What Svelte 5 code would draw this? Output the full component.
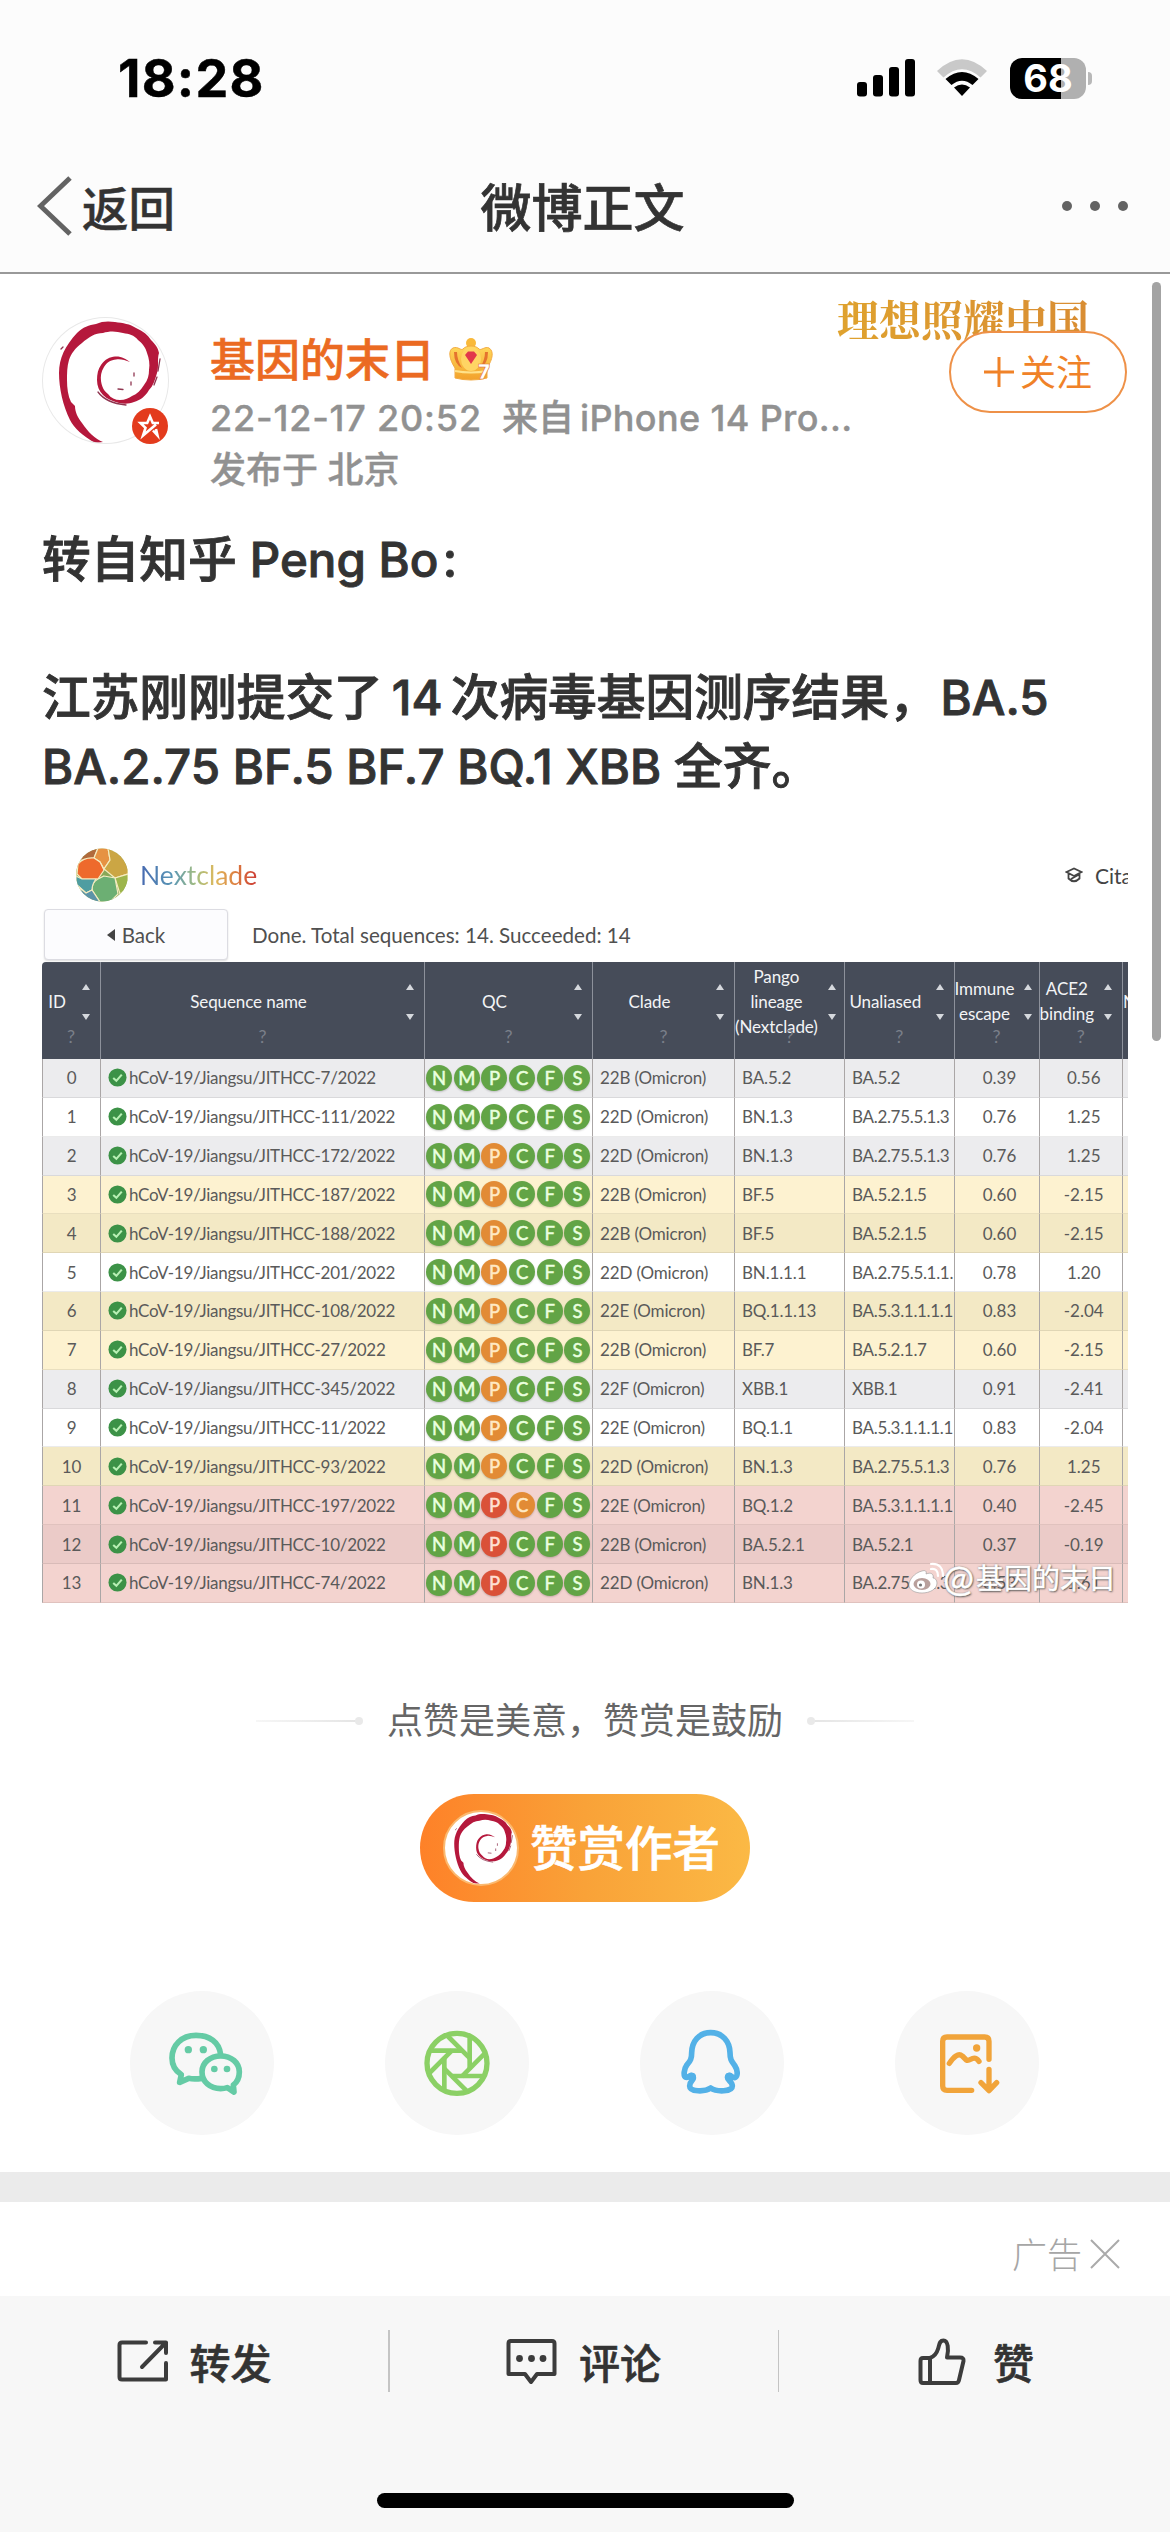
<script>
  const columns = [
    { key: 'id', lines: ['ID'] },
    { key: 'name', lines: ['Sequence name'] },
    { key: 'qc', lines: ['QC'] },
    { key: 'clade', lines: ['Clade'] },
    { key: 'pango', lines: ['Pango', 'lineage', '(Nextclade)'] },
    { key: 'unaliased', lines: ['Unaliased'] },
    { key: 'escape', lines: ['Immune', 'escape'] },
    { key: 'ace', lines: ['ACE2', 'binding'] }
  ];

  // [name suffix, clade, pango, unaliased, immune escape, ACE2, row tone, QC levels]
  const rows = [
    ['7', '22B', 'BA.5.2', 'BA.5.2', '0.39', '0.56', 'gray', 'gggggg'],
    ['111', '22D', 'BN.1.3', 'BA.2.75.5.1.3', '0.76', '1.25', 'white', 'gggggg'],
    ['172', '22D', 'BN.1.3', 'BA.2.75.5.1.3', '0.76', '1.25', 'gray', 'ggoggg'],
    ['187', '22B', 'BF.5', 'BA.5.2.1.5', '0.60', '-2.15', 'yellow', 'ggoggg'],
    ['188', '22B', 'BF.5', 'BA.5.2.1.5', '0.60', '-2.15', 'yellow-dark', 'ggoggg'],
    ['201', '22D', 'BN.1.1.1', 'BA.2.75.5.1.1.', '0.78', '1.20', 'white', 'ggoggg'],
    ['108', '22E', 'BQ.1.1.13', 'BA.5.3.1.1.1.1', '0.83', '-2.04', 'yellow-dark', 'ggoggg'],
    ['27', '22B', 'BF.7', 'BA.5.2.1.7', '0.60', '-2.15', 'yellow', 'ggoggg'],
    ['345', '22F', 'XBB.1', 'XBB.1', '0.91', '-2.41', 'gray', 'ggoggg'],
    ['11', '22E', 'BQ.1.1', 'BA.5.3.1.1.1.1', '0.83', '-2.04', 'white', 'ggoggg'],
    ['93', '22D', 'BN.1.3', 'BA.2.75.5.1.3', '0.76', '1.25', 'yellow-dark', 'ggoggg'],
    ['197', '22E', 'BQ.1.2', 'BA.5.3.1.1.1.1', '0.40', '-2.45', 'red', 'ggrogg'],
    ['10', '22B', 'BA.5.2.1', 'BA.5.2.1', '0.37', '-0.19', 'red-dark', 'ggrggg'],
    ['74', '22D', 'BN.1.3', 'BA.2.75.5.1.3', '0.53', '1.61', 'red', 'ggrggg']
  ];
  const qcLetters = ['N', 'M', 'P', 'C', 'F', 'S'];
  const bladeAngles = [0, 45, 90, 135, 180, 225, 270, 315];
</script>

{#snippet swirl()}
  <svg class="swirl" viewBox="0 0 125 125">
    <path
      d="M52 125 C40 118 31 110 27 102 C20 88 16 70 16 55 C16 40 22 28 34 15 C40 9 46 7 53 6 C59 3 66 3 72 4 C80 5 87 6 93 10 C100 13 105 17 108 22 C113 27 115 30 116 35 C114 41 116 48 114 55 C112 62 110 68 106 72 C102 79 97 82 91 84 C86 86 81 86 76 85 C69 83 64 81 60 77 C56 73 54 68 54 62 C54 56 55 51 58 47 C62 41 67 39 72 38.500 C78 38 83 41 87 44 C82 42 77 40.500 73 41.500 C68 42 64 44 61 49 C58 54 57.500 58 58 63 C59 69 61 73 65 76 C68 80 72 82 77 82 C82 82 86 80 89 78 C94 76 98 72 101 67 C105 62 106 57 106 52 C107 46 106 40 104 35 C103 30 99 25 95 22 C91 17 86 16 80 15 C73 13 66 13 60 15 C52 15 46 19 39 25 C32 30 28 36 26 42 C24 49 24 55 24 62 C24 70 25 78 28 84 L32 88 C32 94 35 100 39 105 C45 114 52 121 60 124 Z"
      fill="#b5183c"
    />
    <path d="M91 55 v3 M88 64 v3 M75 71 l5 .5 M18 31 l2 -2 M117 41 l-2 12 M114 59 l-3 8 M55 74 q8 11 28 13" fill="none" stroke="#8f3550" stroke-width="1.300" stroke-linecap="round" />
  </svg>
{/snippet}

<div class="screen">
  <header class="top">
    <div class="status">
      <span class="time">18:28</span>
      <div class="indicators">
        <svg class="signal" viewBox="0 0 58 38" width="58" height="38">
          <rect x="0" y="23" width="10" height="14.500" rx="3" />
          <rect x="16" y="16" width="10" height="21.500" rx="3" />
          <rect x="32" y="8" width="10" height="29.500" rx="3" />
          <rect x="48" y="0" width="10" height="37.500" rx="3" />
        </svg>
        <svg class="wifi" viewBox="0 0 52 38" width="52" height="38">
          <path d="M1 12 Q26 -11.500 51 12 L44.500 18.500 Q26 2 7.500 18.500 Z" fill="#c9c9c9" />
          <path d="M9.500 20 Q26 6 42.500 20 L36.500 26 Q26 17.500 15.500 26 Z" />
          <path d="M18 28.500 Q26 22.500 34 28.500 L26 37 Z" />
        </svg>
        <div class="battery">
          <div class="cell">68</div>
          <i></i>
        </div>
      </div>
    </div>
    <nav class="navbar">
      <div class="back">
        <svg viewBox="0 0 36 60" width="36" height="60"><path d="M33 2 L3.500 30 L33 58" fill="none" stroke="#636363" stroke-width="5" /></svg>
        <span>返回</span>
      </div>
      <h1>微博正文</h1>
      <div class="more"><i></i><i></i><i></i></div>
    </nav>
  </header>

  <main>
    <section class="author">
      <div class="avatar">
        {@render swirl()}
        <svg class="badge" viewBox="0 0 36 36">
          <circle cx="18" cy="18" r="18" fill="#e33b1d" />
          <path d="M27 15 H20.800 L18 8.500 L15.200 15 H8.500 L13.500 19.800 L11 27.500 L24 16.500 M21 22.500 L25.500 27.500 L24 21" fill="none" stroke="#fff" stroke-width="2.600" />
        </svg>
      </div>
      <div class="meta">
        <div class="name-row">
          <span class="name">基因的末日</span>
          <svg class="crown" viewBox="0 0 44 44">
            <defs>
              <linearGradient id="gold" x1="0" y1="0" x2="0" y2="1">
                <stop offset="0" stop-color="#ffd95c" /><stop offset="1" stop-color="#f2a12b" />
              </linearGradient>
            </defs>
            <circle cx="22" cy="6" r="5" fill="#f9b93a" />
            <path d="M6 41 L6 31 C0 22 -1 13 4 11 C9 9 12 14 14 12 C17 8 27 8 30 12 C32 14 36 9 40 11 C45 14 44 22 38 31 L38 41 Q22 45 6 41 Z" fill="url(#gold)" stroke="#f3ab42" />
            <path d="M5 15 Q5 27 13 31 Q8 23 8 15 M39 15 Q39 27 31 31 Q36 23 36 15" fill="#e5732e" />
            <ellipse cx="22" cy="22" rx="10" ry="12" fill="#ffd564" />
            <path d="M16 18 L19 14.500 H25 L28 18 L22 27 Z" fill="#e2384b" />
            <path d="M6 34 Q22 37 38 34" fill="none" stroke="#ffe28a" stroke-width="2" />
            <text x="29" y="42" class="level">7</text>
          </svg>
        </div>
        <div class="sub"><span class="date">22-12-17 20:52</span><span class="from">来自</span><span class="device">iPhone 14 Pro...</span></div>
        <div class="sub place">发布于 北京</div>
      </div>
      <div class="slogan">理想照耀中国</div>
      <button class="follow">
        <svg viewBox="0 0 30 30" width="30" height="30"><path d="M15 0 V30 M0 15 H30" stroke="#f08228" stroke-width="3" /></svg>
        <span>关注</span>
      </button>
    </section>

    <article class="text">
      <p><span>转自知乎</span> <b class="peng">Peng Bo</b><span class="colon">:</span></p>
      <p>&nbsp;</p>
      <p>江苏刚刚提交了<b class="num">14</b>次病毒基因测序结果，<b class="ba">BA.5</b></p>
      <p><b class="list">BA.2.75 BF.5 BF.7 BQ.1 XBB</b> 全齐。</p>
    </article>

    <figure class="shot">
      <div class="brand">
        <svg class="globe" viewBox="0 0 52 54">
          <defs><clipPath id="ball"><ellipse cx="26" cy="27" rx="26" ry="26.500" /></clipPath></defs>
          <g clip-path="url(#ball)" stroke="#f5ecc0" stroke-width="1.200">
            <rect width="52" height="54" fill="#8aa757" />
            <path d="M10 0 H22 L18 10 L8 12 L0 12 Z" fill="#b06a3c" />
            <path d="M18 10 L22 0 H32 L34 12 L28 21 L24 14 Z" fill="#e69243" />
            <path d="M2 16 Q8 9 18 10 L24 14 L28 22 L22 31 H6 L1 26 Z" fill="#ee6a2c" />
            <path d="M34 12 L32 0 L52 10 V26 L39 30 L28 21 Z" fill="#cba644" />
            <path d="M39 30 L52 26 V40 L44 46 Z" fill="#9db54c" />
            <path d="M28 28 L39 30 L42 46 L34 54 H24 L16 42 Q16 34 22 31 Z" fill="#6caf73" />
            <path d="M0 28 L6 31 H20 Q16 36 16 42 L10 45 L0 36 Z" fill="#4f9da1" />
            <path d="M4 40 L10 45 L16 42 L24 54 H8 Z" fill="#5c93a8" />
          </g>
        </svg>
        <span class="nextclade">Nextclade</span>
        <span class="cite">
          <svg viewBox="0 0 18 16" width="18" height="16"><path d="M1.500 5 L9 1.500 L16.500 5 L9 9 Z M3.500 7 V11.500 Q9 17 14.500 11.500 V7 M6 12 L14 7.500" fill="none" stroke="#444" stroke-width="1.800" /></svg>
          <span>Citation</span>
        </span>
      </div>
      <div class="toolbar">
        <span class="back-btn"><svg viewBox="0 0 8 12" width="8" height="12"><path d="M8 0 V12 L0 6 Z" fill="#444" /></svg>Back</span>
        <span class="done">Done. Total sequences: 14. Succeeded: 14</span>
      </div>
      <div class="grid head">
        {#each columns as c}
          <div class="hcell">
            <div class="label">{#each c.lines as l}<span>{l}</span>{/each}</div>
            <svg class="sort" viewBox="0 0 8 36" width="8" height="36"><path d="M0 6 L4 0 L8 6 Z M0 30 L4 36 L8 30 Z" fill="#d5d8dd" /></svg>
            <em>?</em>
          </div>
        {/each}
        <div class="hcell next">N</div>
      </div>
      {#each rows as r, i}
        <div class="grid row {r[6]}">
          <div class="c mid">{i}</div>
          <div class="c name-cell">
            <svg viewBox="0 0 20 20" width="19" height="19"><circle cx="10" cy="10" r="9.500" fill="#3c9247" /><path d="M5.500 10.500 L8.800 13.500 L14.500 7" fill="none" stroke="#b9f0b5" stroke-width="2.200" /></svg>
            <span>hCoV-19/Jiangsu/JITHCC-{r[0]}/2022</span>
          </div>
          <div class="c qc">{#each qcLetters as q, k}<i class={r[7][k]}>{q}</i>{/each}</div>
          <div class="c">{r[1]} (Omicron)</div>
          <div class="c">{r[2]}</div>
          <div class="c un">{r[3]}</div>
          <div class="c mid num-cell">{r[4]}</div>
          <div class="c mid num-cell">{r[5]}</div>
          <div class="c"></div>
        </div>
      {/each}
      <div class="watermark">
        <svg viewBox="0 0 36 32" width="36" height="32">
          <path d="M14 9 C6 11 1 18 1 23 C1 28 7 31 14 31 C22 31 29 27 29 21 C29 18 27 16 25 16 C26 12 23 10 18 12 C19 9 17 8 14 9 Z" fill="#fff" stroke="#999" stroke-width=".6" />
          <ellipse cx="14" cy="22" rx="8.500" ry="6" fill="#b9a09c" /><circle cx="13" cy="22.500" r="4" fill="#fff" /><circle cx="12.500" cy="23" r="1.600" fill="#777" />
          <path d="M23 7 Q30 6 30 14 M23 2 Q35 1 35 14" fill="none" stroke="#fff" stroke-width="2.200" stroke-linecap="round" />
        </svg>
        <span class="at">@</span><span>基因的末日</span>
      </div>
    </figure>

    <section class="tip">
      <div class="tip-line">
        <i class="rule left"></i><span>点赞是美意，赞赏是鼓励</span><i class="rule right"></i>
      </div>
      <button class="reward"><span class="mini">{@render swirl()}</span><span class="reward-text">赞赏作者</span></button>
    </section>

    <section class="share">
      <span class="bubble">
        <svg viewBox="60 61 432 432">
          <g fill="none" stroke="#65cba5" stroke-width="17" stroke-linejoin="round">
            <path d="M332 252 C328 214 298 194 258 194 C214 194 186 224 186 262 C186 286 198 302 214 312 L209 335 L236 323 C250 326 262 325 276 323" />
            <path d="M332 256 C300 256 276 276 276 304 C276 333 300 354 332 354 C340 354 346 353 352 351 L372 364 L370 343 C382 334 388 320 388 304 C388 276 364 256 332 256 Z" />
          </g>
          <g fill="#65cba5"><circle cx="235" cy="237" r="11" /><circle cx="280" cy="237" r="11" /><circle cx="313" cy="295" r="10" /><circle cx="351" cy="295" r="10" /></g>
        </svg>
      </span>
      <span class="bubble">
        <svg viewBox="827 61 432 432">
          <g fill="none" stroke="#8bd065" stroke-width="14">
            <circle cx="1043" cy="278" r="90" stroke-width="16" />
            {#each bladeAngles as a}
              <path d="M1081 198 V296" transform="rotate({a} 1043 278)" />
            {/each}
          </g>
        </svg>
      </span>
      <span class="bubble">
        <svg viewBox="91 61 432 432">
          <path d="M303 186 C268 186 247 212 246 246 C246 268 240 272 232 282 C222 296 221 316 228 320 C236 324 244 306 250 318 C256 330 240 328 240 346 C240 364 286 364 303 352 C320 364 368 364 368 346 C368 330 350 330 354 318 C360 306 370 326 377 320 C386 314 383 296 375 284 C367 273 361 268 361 246 C360 212 338 186 303 186 Z" fill="none" stroke="#53b1e7" stroke-width="17" stroke-linejoin="round" />
          <circle cx="247" cy="318" r="12" fill="#53b1e7" /><circle cx="358" cy="318" r="12" fill="#53b1e7" />
        </svg>
      </span>
      <span class="bubble">
        <svg viewBox="856 61 432 432">
          <g fill="none" stroke="#f1a43a" stroke-width="16" stroke-linecap="round" stroke-linejoin="round">
            <path d="M1138 266 V212 Q1138 199 1125 199 H1012 Q999 199 999 212 V346 Q999 359 1012 359 H1086" />
            <path d="M1138 296 V358 M1114 336 L1138 360 L1161 336" />
            <path d="M1019 278 C1032 258 1046 246 1058 256 L1070 268 C1082 276 1090 248 1108 272" />
          </g>
          <circle cx="1101" cy="232" r="11" fill="#f1a43a" />
        </svg>
      </span>
    </section>

    <div class="band"></div>
    <div class="ad"><span>广告</span><svg viewBox="0 0 30 30" width="30" height="30"><path d="M1 1 L29 29 M29 1 L1 29" stroke="#aaa" stroke-width="2" /></svg></div>
  </main>

  <footer>
    <div class="actions">
      <div class="act">
        <svg viewBox="0 0 52 46" width="52" height="46"><path d="M29 4.500 H5 Q2.500 4.500 2.500 7 V39 Q2.500 41.500 5 41.500 H49 V25 M38 4.500 H49 V15 M49 4.500 L25 29" /></svg>
        <span>转发</span>
      </div>
      <i class="sep"></i>
      <div class="act">
        <svg viewBox="0 0 52 48" width="52" height="48"><path d="M4 4 H46 Q48.500 4 48.500 6.500 V37 H31 L25 45 L19 37 H2.500 V6.500 Q2.500 4 5 4 Z" /><g class="dots"><circle cx="13.500" cy="21.500" r="3.400" /><circle cx="25.500" cy="21.500" r="3.400" /><circle cx="37" cy="21.500" r="3.400" /></g></svg>
        <span>评论</span>
      </div>
      <i class="sep"></i>
      <div class="act">
        <svg viewBox="0 0 48 50" width="48" height="50"><path d="M12 22 H5 Q2.500 22 2.500 25 V44 Q2.500 47 5 47 H38 Q40.500 47 41 44 L45.500 25 Q46 21.500 42 21.500 H29 C31 13 30 4.500 25.500 4.500 C21 4.500 21.500 9 20 13 C18.500 18 15 21 12 22 V47" /></svg>
        <span>赞</span>
      </div>
    </div>
    <i class="home"></i>
  </footer>
  <i class="scroll"></i>
</div>

<style>
  :global(body) { margin: 0; background: #fff; }
  .screen {
    position: relative; width: 1170px; height: 2532px; overflow: hidden; background: #fff; color: #333;
    display: flex; flex-direction: column;
    font-family: Inter, "Noto Sans CJK SC", sans-serif;
  }
  .screen :global(*) { box-sizing: border-box; }
  svg { display: block; flex: none; }
  i { font-style: normal; }
  button { margin: 0; padding: 0; font: inherit; }
  p, h1, figure { margin: 0; }

  .top { height: 274px; flex: none; background: #fcfcfc; border-bottom: 2px solid #999; }
  .status { height: 156px; display: flex; justify-content: space-between; padding: 0 78px 0 118px; align-items: center; }
  .time { font-size: 52px; font-weight: 700; color: #000; letter-spacing: 1.300px; -webkit-text-stroke: .5px #000; }
  .indicators { display: flex; align-items: center; }
  .wifi { margin: 0 22px 0 21px; }
  .battery { display: flex; align-items: center; gap: 2px; }
  .cell { width: 76px; height: 41px; border-radius: 12px; background: linear-gradient(90deg, #000 51px, #b0b0b0 51px); color: #fff; font-size: 38px; font-weight: 700; line-height: 41px; text-align: center; }
  .battery i { width: 4px; height: 13px; border-radius: 0 4px 4px 0; background: #b8b8b8; }
  .navbar { height: 100px; display: grid; grid-template-columns: 1fr auto 1fr; align-items: center; padding: 0 42px 0 37px; }
  .back { display: flex; align-items: center; gap: 9px; font-size: 46.500px; font-weight: 500; line-height: 60px; -webkit-text-stroke: .5px #333; }
  .back span, h1 { padding-top: 5px; }
  h1 { font-size: 51px; font-weight: 500; line-height: 60px; -webkit-text-stroke: .7px #333; }
  .more { justify-self: end; display: flex; gap: 18px; }
  .more i { width: 10px; height: 10px; border-radius: 50%; background: #636363; }

  main { flex: none; height: 2022px; }
  .author { position: relative; height: 217px; display: flex; padding-left: 43px; }
  .avatar { position: relative; width: 125px; height: 125px; margin-top: 44px; flex: none; }
  .avatar .swirl { border-radius: 50%; box-shadow: 0 0 0 1px #e8e8e8; }
  .badge { position: absolute; right: 0; bottom: -1px; width: 36px; height: 36px; }
  .meta { margin: 56px 0 0 42px; }
  .name-row { display: flex; align-items: center; gap: 14px; height: 62px; }
  .name { font-size: 45px; font-weight: 500; color: #eb6a22; line-height: 62px; -webkit-text-stroke: .6px #eb6a22; }
  .crown { width: 44px; height: 44px; margin-top: -4px; }
  .level { font: 900 20px Inter, sans-serif; fill: #fff; stroke: #e2762b; stroke-width: .6px; }
  .sub { font-size: 36px; font-weight: 500; color: #919191; line-height: 52px; height: 52px; display: flex; white-space: pre; -webkit-text-stroke: .4px #919191; }
  .date { width: 292px; letter-spacing: .8px; }
  .from { width: 78px; }
  .device { letter-spacing: .35px; }
  .slogan {
    position: absolute; left: 837px; top: 16px; font-family: "Noto Serif CJK SC", "Noto Sans CJK SC", serif; font-weight: 700;
    font-size: 42px; line-height: 56px; background: linear-gradient(90deg, #dfa22e, #d98d33); background-clip: text; color: transparent; white-space: nowrap;
  }
  .follow {
    position: absolute; left: 949px; top: 57px; width: 178px; height: 82px; border: 2px solid #ee9148; border-radius: 41px; background: #fff;
    color: #f08228; font-size: 36px; display: flex; align-items: center; justify-content: center; gap: 6px;
  }
  .follow span { margin-top: -4px; }

  .text { padding: 34px 0 0 42px; height: 344px; font-size: 48.700px; font-weight: 500; line-height: 69px; white-space: nowrap; -webkit-text-stroke: .9px #333; }
  .text p { height: 69px; }
  .text b { font-weight: 500; font-size: 47.500px; }
  .colon { margin-left: 4px; }
  .num { margin: 0 8px 0 9px; }
  .ba { margin-left: 3px; }

  .shot { position: relative; width: 1086px; height: 768px; margin-left: 42px; overflow: hidden; font-family: Lato, sans-serif; color: #5a5a5a; }
  .brand { height: 74px; display: flex; align-items: center; padding: 6px 0 0 34px; }
  .globe { width: 52px; height: 54px; }
  .nextclade { font-size: 26.500px; margin-left: 12px; background: linear-gradient(90deg, #4668b0, #5a97b5 28%, #a5be80 48%, #dfb85c 65%, #dc7c3e 82%, #cc3b35); background-clip: text; color: transparent; }
  .cite { margin-left: auto; width: 63px; display: flex; align-items: center; gap: 12px; font-size: 21px; white-space: nowrap; color: #444; }
  .toolbar { height: 53px; display: flex; align-items: center; padding: 0 0 2px 2px; font-size: 20.600px; color: #505050; }
  .back-btn { width: 184px; height: 51px; border: 1.500px solid #dcdce2; border-radius: 4px; display: flex; align-items: center; justify-content: center; gap: 7px; background: #fcfcfe; box-shadow: 0 1px 2px #ddd; }
  .done { margin-left: 24px; }
  .grid { display: grid; grid-template-columns: 59px 324px 168px 142px 110px 109.500px 85px 83.500px 5px; }
  .head { height: 97px; background: #464c59; color: #f3f4f6; border-radius: 4px 0 0 0; }
  .hcell { position: relative; display: flex; align-items: center; border-right: 1.500px solid #8d919b; font-size: 17px; line-height: 25px; padding-bottom: 19px; min-width: 0; letter-spacing: -.1px; }
  .label { flex: 1 0 auto; display: flex; flex-direction: column; align-items: center; white-space: nowrap; }
  .sort { margin: 2px 10px 0; }
  .hcell em { position: absolute; left: 0; right: 0; bottom: 10px; text-align: center; font-style: normal; color: #7a7f89; font-size: 18px; }
  .next { border: 0; overflow: hidden; }
  .row { height: 38.850px; font-size: 17px; letter-spacing: -.15px; }
  .c { display: flex; align-items: center; border-right: 1.500px solid #aaa6a6; padding-left: 7px; white-space: nowrap; overflow: hidden; min-width: 0; border-bottom: 1px solid rgb(0 0 0 / 8%); }
  .c:first-child { border-left: 1px solid #aaa6a6; }
  .c.mid { padding: 0; justify-content: center; }
  .c.num-cell { padding-left: 6px; letter-spacing: 0; }
  .c.un { letter-spacing: -.32px; }
  .name-cell { gap: 2px; letter-spacing: -.27px; }
  .c.qc { padding: 0 0 0 1px; gap: 1.700px; }
  .qc i { width: 26px; height: 26px; flex: none; border-radius: 50%; background: #62a446; color: #eaffdf; text-align: center; line-height: 26px; font-size: 18.500px; -webkit-text-stroke: .5px; box-shadow: 0 1px 2px rgb(0 0 0 / 20%); }
  .qc i.o { background: #e28b35; color: #ffe9c4; }
  .qc i.r { background: #da5138; color: #ffe0d4; }
  .gray { background: #ececee; }
  .white { background: #fff; }
  .yellow { background: #fdf2d0; }
  .yellow-dark { background: #f3e9c5; }
  .red { background: #f3d3cf; }
  .red-dark { background: #ebcbc8; }
  .watermark { position: absolute; right: 12px; bottom: 8px; display: flex; align-items: center; font: 28px/34px Lato, "Noto Sans CJK SC", sans-serif; color: #fff; -webkit-text-stroke: .5px #fff; text-shadow: 1px 1px 2px #555, 0 0 2px #777; }
  .at { font-size: 37px; width: 33px; margin-left: -1px; }

  .tip { height: 388px; padding-top: 92px; display: flex; flex-direction: column; align-items: center; }
  .tip-line { display: flex; align-items: center; height: 52px; font-size: 36px; line-height: 52px; color: #666; }
  .rule { position: relative; width: 104px; height: 2px; background: linear-gradient(90deg, #f6f6f6, #e4e4e4); }
  .rule::after { content: ""; position: absolute; right: -3px; top: -3px; width: 8px; height: 8px; border-radius: 50%; background: #e9e9e9; }
  .rule.left { margin-right: 27px; }
  .rule.right { margin-left: 27px; transform: rotate(180deg); }
  .reward { margin-top: 47px; width: 330px; height: 108px; border: 0; border-radius: 54px; background: linear-gradient(90deg, #fe8128, #f9a238 50%, #fbb945); color: #fff; font-size: 47.500px; font-weight: 500; display: flex; align-items: center; padding-left: 23px; gap: 11px; }
  .reward-text { margin-top: -5px; -webkit-text-stroke: .6px #fff; }
  .mini { width: 76px; height: 76px; border-radius: 50%; background: #fff; border: 2px solid #fbb96f; overflow: hidden; }

  .share { height: 181px; display: flex; gap: 111px; padding-left: 130px; }
  .bubble { width: 144px; height: 144px; border-radius: 50%; background: #f7f7f7; }
  .band { height: 30px; background: #ebebeb; }
  .ad { height: 94px; display: flex; justify-content: flex-end; align-items: center; gap: 8px; padding-right: 50px; padding-top: 10px; font-size: 35px; font-weight: 300; color: #a6a6a6; }
  .ad span { margin-top: -3px; }

  footer { flex: 1; background: #f7f7f7; display: flex; flex-direction: column; align-items: center; }
  .actions { display: flex; width: 100%; height: 130px; align-items: center; }
  .act { flex: 1; display: flex; align-items: center; justify-content: center; gap: 21px; font-size: 41px; font-weight: 500; -webkit-text-stroke: .6px #333; }
  .act:last-child { gap: 27px; padding-left: 3px; }
  .act svg { fill: none; stroke: #3c3c3c; stroke-width: 4; stroke-linejoin: round; stroke-linecap: round; }
  .act svg .dots { fill: #3c3c3c; stroke: none; }
  .sep { width: 1.500px; height: 62px; background: #c4c4c4; }
  .home { width: 417px; height: 15px; border-radius: 8px; background: #000; margin-top: 67px; }
  .scroll { position: absolute; left: 1152px; top: 282px; width: 9px; height: 759px; border-radius: 5px; background: #a3a3a3; }
</style>
